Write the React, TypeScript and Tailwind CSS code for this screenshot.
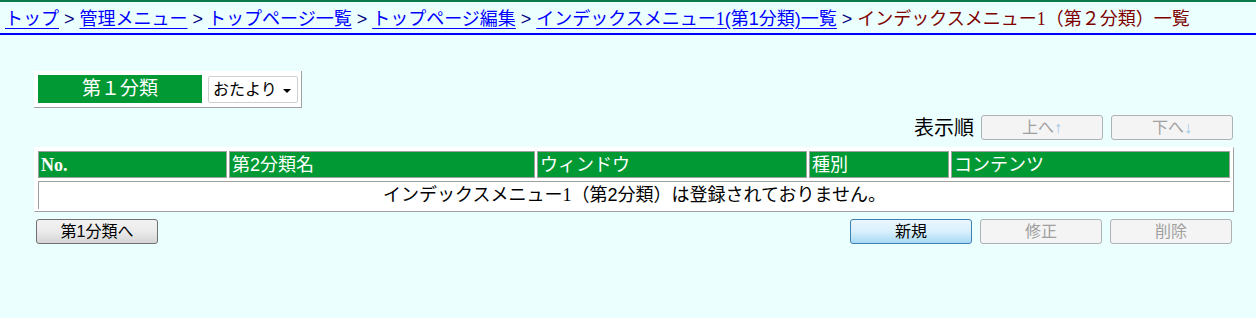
import React from "react";

const JP = "font-['Liberation_Sans','Noto_Sans_CJK_JP',sans-serif]";

function Sep() {
  return <span className="text-[#000080] whitespace-pre">{" > "}</span>;
}

function One() {
  return <span className="font-['Liberation_Serif','Noto_Sans_CJK_JP',serif]">1</span>;
}

function Btn({
  children,
  variant = "normal",
  className = "",
}: {
  children: React.ReactNode;
  variant?: "normal" | "primary" | "disabled";
  className?: string;
}) {
  const base =
    "h-[25px] w-[122px] rounded-[3px] border text-[16px] leading-none flex items-center justify-center";
  const v =
    variant === "primary"
      ? "border-[#3c7fb1] bg-gradient-to-b from-[#eaf6fd] via-[#d9f0fc] to-[#a7d9f5] text-black"
      : variant === "disabled"
      ? "border-[#adb2b5] bg-[#f4f4f4] text-[#a0a0a0]"
      : "border-[#707070] bg-gradient-to-b from-[#f2f2f2] via-[#ebebeb] to-[#d5d5d5] text-black";
  return <div className={`${base} ${v} ${className}`}>{children}</div>;
}

function Th({ children, w, className = "" }: { children: React.ReactNode; w: string; className?: string }) {
  return (
    <div
      className={`${w} h-[27px] bg-[#009933] text-white text-[18px] leading-none flex items-center pl-[2px] border border-[#a0a0a0] ${className}`}
    >
      {children}
    </div>
  );
}

export default function App() {
  return (
    <div className={`min-h-[318px] w-[1256px] bg-[#ebffff] ${JP}`}>
      {/* breadcrumb */}
      <div className="border-t-2 border-t-[#0b7b4b] border-b-2 border-b-[#0000ff] h-[35px] pl-[5px] pt-[7px] text-[18px] leading-[20px] whitespace-nowrap">
        <a className="text-[#0000ff] underline underline-offset-[3px]">トップ</a>
        <Sep />
        <a className="text-[#0000ff] underline underline-offset-[3px]">管理メニュー</a>
        <Sep />
        <a className="text-[#0000ff] underline underline-offset-[3px]">トップページ一覧</a>
        <Sep />
        <a className="text-[#0000ff] underline underline-offset-[3px]">トップページ編集</a>
        <Sep />
        <a className="text-[#0000ff] underline underline-offset-[3px]">
          インデックスメニュー<One />(第1分類)一覧
        </a>
        <Sep />
        <span className="text-[#800000]">
          インデックスメニュー<One />（第２分類）一覧
        </span>
      </div>

      <div className="pl-[34px] pr-[22px]">
        {/* category selector */}
        <div className="mt-[36px] inline-flex items-stretch gap-[6px] bg-white p-[4px] pr-[3px] pb-[4px] border-r border-b border-r-[#a0a0a0] border-b-[#a0a0a0]">
          <div className="w-[164px] h-[28px] bg-[#009933] text-white text-[19px] flex items-center justify-center">
            第１分類
          </div>
          <div className="w-[90px] h-[27px] mt-[1px] bg-white border border-[#d0d0d0] rounded-[2px] flex items-center pl-[4px] text-[16px] text-black relative">
            おたより
            <span className="absolute right-[6px] top-[12px] w-0 h-0 border-l-[4px] border-r-[4px] border-t-[4px] border-l-transparent border-r-transparent border-t-black" />
          </div>
        </div>

        {/* order row */}
        <div className="mt-[7px] flex items-center justify-end gap-[8px] pr-[1px]">
          <span className="text-[20px] leading-none text-black mr-[-1px]">表示順</span>
          <Btn variant="disabled">
            上へ<span className="text-[#9cc8e8]">↑</span>
          </Btn>
          <Btn variant="disabled">
            下へ<span className="text-[#9cc8e8]">↓</span>
          </Btn>
        </div>

        {/* table */}
        <div className="mt-[7px] w-[1200px] bg-white border border-t-white border-l-white border-r-[#a0a0a0] border-b-[#a0a0a0] px-[3px] pt-[3px] pb-[2px]">
          <div className="flex gap-[2px]">
            <Th w="w-[189px]" className="font-['Liberation_Serif',serif] font-bold">No.</Th>
            <Th w="w-[306px]">第2分類名</Th>
            <Th w="w-[270px]">ウィンドウ</Th>
            <Th w="w-[140px]">種別</Th>
            <Th w="w-[279px]">コンテンツ</Th>
          </div>
          <div className="mt-[3px] h-[28px] border-t border-l border-t-[#a0a0a0] border-l-[#a0a0a0] flex items-center justify-center text-[18px] text-black">
            インデックスメニュー<One />（第2分類）は登録されておりません。
          </div>
        </div>

        {/* bottom buttons */}
        <div className="mt-[7px] flex items-center">
          <Btn className="ml-[2px]">第1分類へ</Btn>
          <div className="flex-1" />
          <div className="flex gap-[8px] pr-[2px]">
            <Btn variant="primary">新規</Btn>
            <Btn variant="disabled">修正</Btn>
            <Btn variant="disabled">削除</Btn>
          </div>
        </div>
      </div>
    </div>
  );
}
